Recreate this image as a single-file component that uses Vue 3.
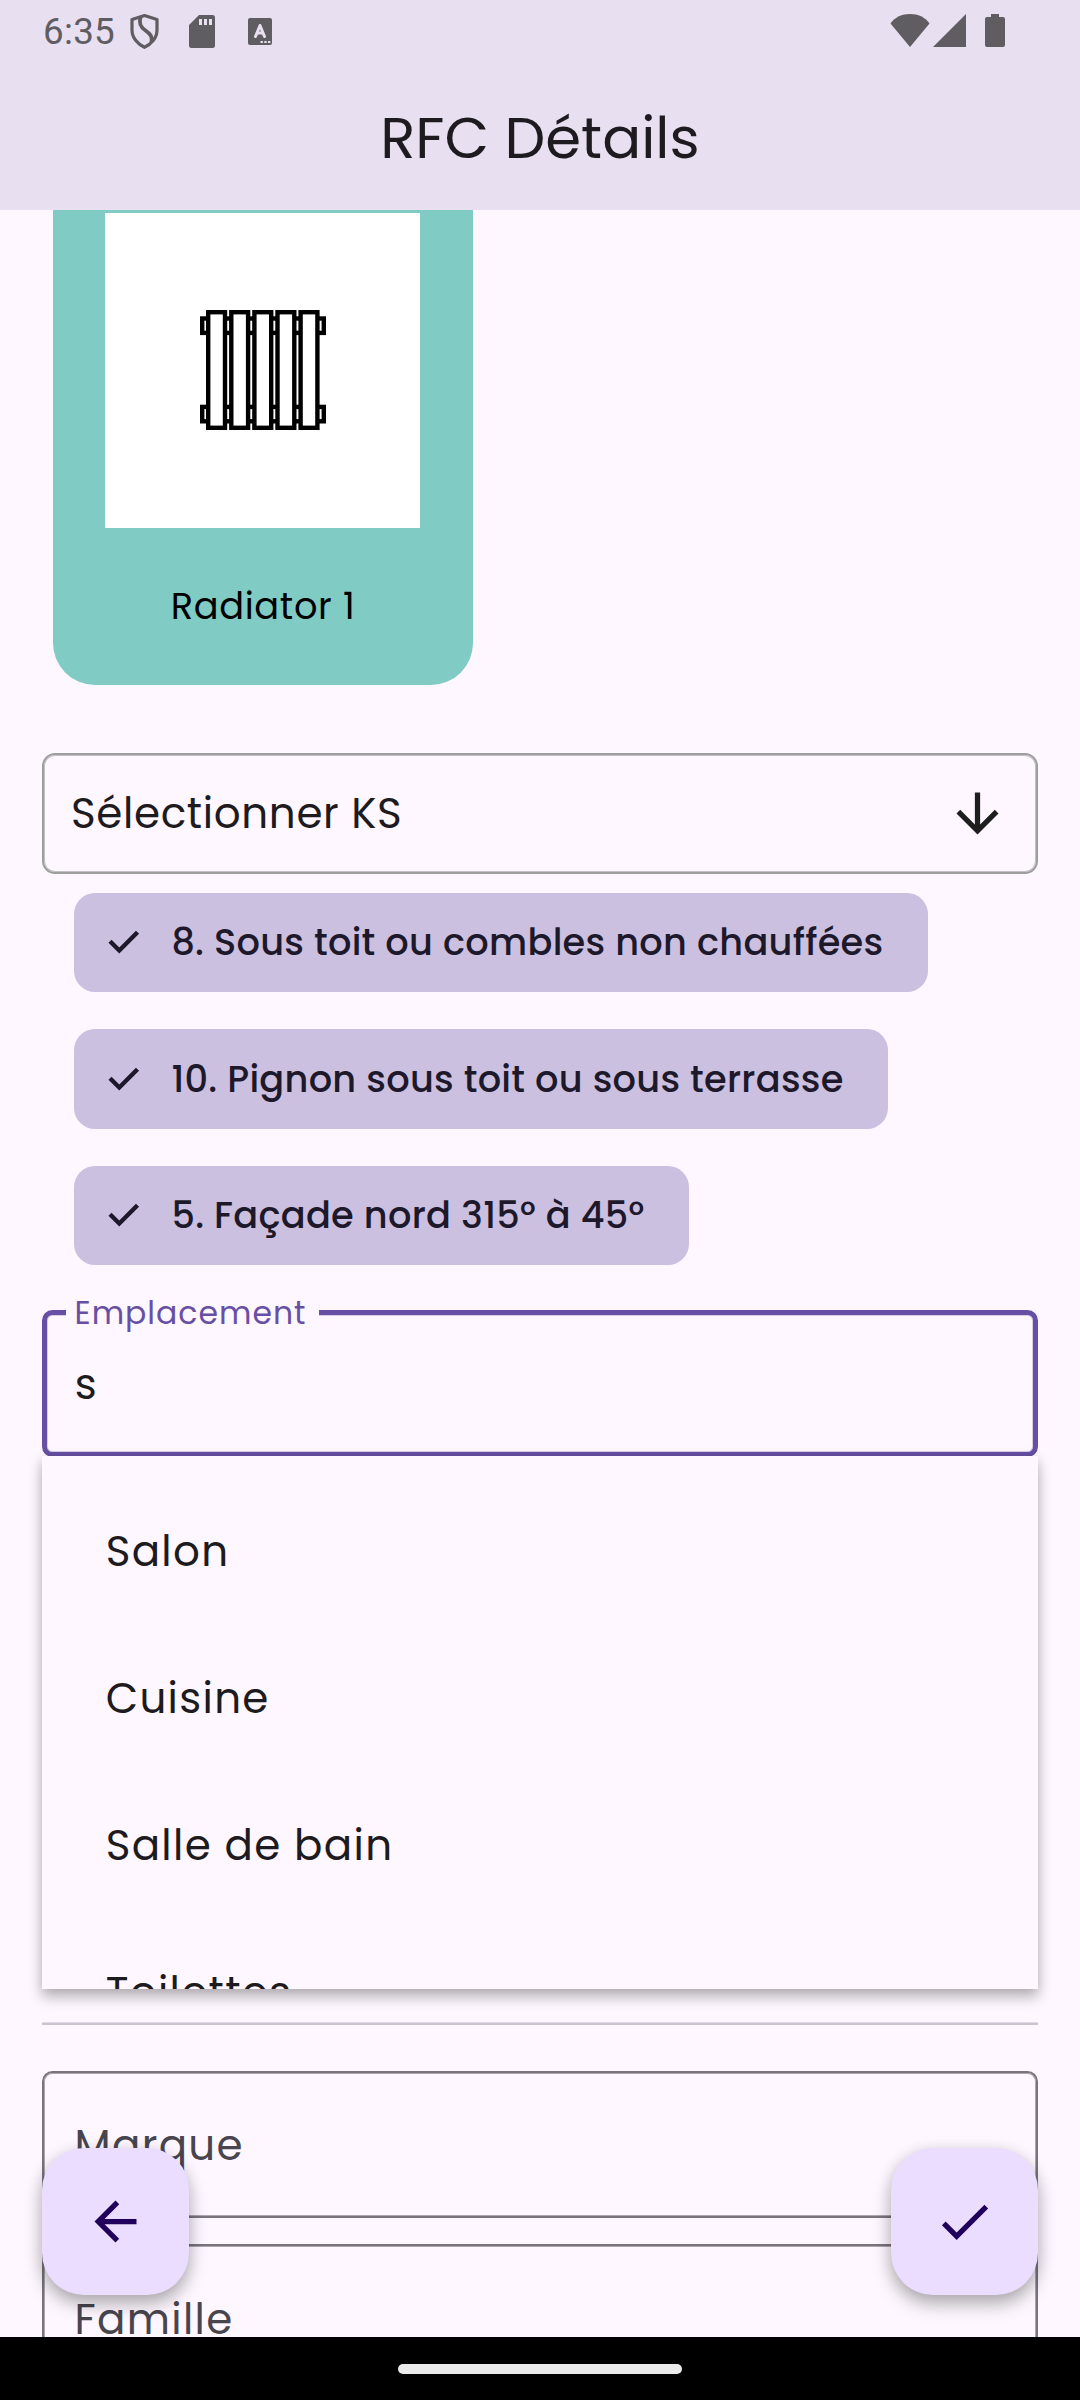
<script setup>
const chips = [
  { text: '8. Sous toit ou combles non chauffées', cls: 'c1' },
  { text: '10. Pignon sous toit ou sous terrasse', cls: 'c2' },
  { text: '5. Façade nord 315° à 45°', cls: 'c3' },
]
const options = ['Salon', 'Cuisine', 'Salle de bain', 'Toilettes']
const bars = [208.2, 231.3, 254.400, 277.5, 300.6]
</script>

<template>
  <div class="screen">
    <header class="header">
      <div class="status">
        <span class="clock">6:35</span>
        <svg class="shield" width="31" height="37" viewBox="0 0 31 37">
          <path d="M15.500 2.500L28 6.500V17C28 25 22 31.500 15.500 34.300C9 31.500 3 25 3 17V6.500Z" fill="none" stroke="#5f5c62" stroke-width="3.200" stroke-linejoin="round" />
          <path d="M11.500 4C9.500 11 12 14.500 16.500 17.500C21.500 21 23.500 23.500 22.500 29" fill="none" stroke="#5f5c62" stroke-width="3.800" />
        </svg>
        <svg class="sd" width="26" height="33" viewBox="0 0 26 33">
          <path fill-rule="evenodd" d="M10 0H23.500Q26 0 26 2.500V30.500Q26 33 23.500 33H2.500Q0 33 0 30.500V10ZM10 4V10H13V4ZM15 4V10H18V4ZM20 4V10H23V4Z" fill="#5f5c62" />
        </svg>
        <svg class="abox" width="24" height="27" viewBox="0 0 24 27">
          <rect width="24" height="27" rx="2" fill="#5f5c62" />
          <path d="M7.500 18.500L12 7.500L16.500 18.500M9 15H15" fill="none" stroke="#e8dff0" stroke-width="3" stroke-linecap="round" stroke-linejoin="round" />
          <path d="M12.500 23h2.400v2h-2.400zM16.300 23h2.400v2h-2.400zM20 23h2.400v2H20z" fill="#e8dff0" />
        </svg>
        <span class="spacer"></span>
        <svg class="wifi" width="40" height="33" viewBox="0 0 40 33">
          <path d="M20 33L0.500 9.500C5 3 12 0 20 0S35 3 39.500 9.500Z" fill="#5f5c62" />
        </svg>
        <svg class="signal" width="33" height="33" viewBox="0 0 33 33">
          <path d="M33 0V33H0Z" fill="#5f5c62" />
        </svg>
        <svg class="battery" width="20" height="33" viewBox="0 0 20 33">
          <path d="M6 0H14V3H18Q20 3 20 5V31Q20 33 18 33H2Q0 33 0 31V5Q0 3 2 3H6Z" fill="#5f5c62" />
        </svg>
      </div>
      <h1 class="title"><span>RFC Détails</span></h1>
    </header>

    <main class="content">
      <section class="card">
        <div class="photo">
          <svg width="129" height="125" viewBox="198 308 129 125">
            <g fill="#fff" stroke="#000" stroke-width="4.400">
              <rect x="202.200" y="318.500" width="121.600" height="14.400" />
              <rect x="202.200" y="406.900" width="121.600" height="14.400" />
              <rect v-for="x in bars" :key="x" :x="x" y="312.200" width="16.800" height="115.600" />
            </g>
          </svg>
        </div>
        <p class="card-label">Radiator 1</p>
      </section>

      <div class="select">
        <span class="select-text">Sélectionner KS</span>
        <svg width="63" height="63" viewBox="0 0 24 24">
          <path d="M20 12l-1.410-1.410L13 16.170V4h-2v12.170l-5.580-5.590L4 12l8 8 8-8z" fill="#1d1f1e" />
        </svg>
      </div>

      <div class="chips">
        <div v-for="c in chips" :key="c.text" class="chip" :class="c.cls">
          <svg width="42" height="42" viewBox="0 0 42 42">
            <path d="M7 20.200L16.300 29.500L34.500 11.300" fill="none" stroke="#1d192b" stroke-width="4.400" />
          </svg>
          <span>{{ c.text }}</span>
        </div>
      </div>

      <div class="field active">
        <span class="float-label">Emplacement</span>
        <span class="value">s</span>
        <div class="menu">
          <div v-for="o in options" :key="o" class="option">{{ o }}</div>
        </div>
      </div>

      <hr class="divider" />

      <div class="field outlined"><span class="placeholder">Marque</span></div>
      <div class="field outlined family"><span class="placeholder">Famille</span></div>
    </main>

    <footer class="navbar"><span class="pill"></span></footer>

    <button class="fab left">
      <svg width="63" height="63" viewBox="0 0 24 24">
        <path d="M20 11H7.830l5.590-5.590L12 4l-8 8 8 8 1.410-1.410L7.830 13H20v-2z" fill="#21005d" />
      </svg>
    </button>
    <button class="fab right">
      <svg width="63" height="63" viewBox="0 0 24 24">
        <path d="M9 16.170L4.830 12l-1.420 1.410L9 19 21 7l-1.410-1.410z" fill="#21005d" />
      </svg>
    </button>
  </div>
</template>

<style>
body {
  margin: 0;
  background: #fef7ff;
}
</style>

<style scoped>
.screen {
  position: relative;
  display: flex;
  flex-direction: column;
  width: 1080px;
  height: 2400px;
  overflow: hidden;
  background: #fef7ff;
  color: #1d1b20;
  font-family: Poppins, Inter, "Open Sans", sans-serif;
  white-space: nowrap;
}
.screen * {
  box-sizing: border-box;
}
svg {
  display: block;
  flex: none;
}
.header {
  flex: none;
  height: 210px;
  background: #e8dff0;
}
.status {
  display: flex;
  align-items: flex-start;
  height: 63px;
  padding: 0 75px 0 43px;
}
.clock {
  width: 86px;
  padding-top: 10px;
  font: 36.750px/43px Roboto, sans-serif;
  letter-spacing: 0.300px;
  color: #5f5c62;
}
.shield { margin-top: 13px; }
.sd { margin: 15px 0 0 29px; }
.abox { margin: 18px 0 0 33px; }
.spacer { flex: 1; }
.wifi { margin-top: 14px; }
.signal { margin: 14px 0 0 3px; }
.battery { margin: 14px 0 0 19px; }
.title {
  margin: 0;
  padding-top: 39px;
  text-align: center;
  font-size: 57.750px;
  line-height: 72px;
  font-weight: 400;
}
.content {
  flex: none;
  display: flex;
  flex-direction: column;
  height: 2127px;
  padding: 0 42px;
  overflow: hidden;
}
.card {
  flex: none;
  display: flex;
  flex-direction: column;
  align-items: center;
  width: 420px;
  height: 475px;
  margin-left: 11px;
  padding-top: 3px;
  border-radius: 0 0 42px 42px;
  background: #80cbc4;
}
.photo {
  display: flex;
  align-items: center;
  justify-content: center;
  width: 315px;
  height: 315px;
  margin-right: 1px;
  background: #fff;
}
.card-label {
  margin: 50px 0 0;
  font-size: 36.750px;
  line-height: 56px;
  letter-spacing: 0.656px;
  color: #000;
}
.select {
  flex: none;
  display: flex;
  align-items: center;
  justify-content: space-between;
  height: 121px;
  margin-top: 68px;
  padding: 0 27px;
  border: 2px solid #9e9e9e;
  border-radius: 13px;
  box-shadow: inset 0 0 0 1px rgba(158, 158, 158, 0.620);
}
.select-text {
  font-size: 42px;
  letter-spacing: 0.656px;
}
.chips {
  flex: none;
  display: flex;
  flex-direction: column;
  align-items: flex-start;
  gap: 37px;
  margin: 18.500px 0 0 31.500px;
}
.chip {
  display: flex;
  align-items: center;
  height: 99.500px;
  padding-left: 29.500px;
  border-radius: 21px;
  background: #cbc0e0;
  color: #1d192b;
  font-size: 36.750px;
  font-weight: 500;
  letter-spacing: 0.262px;
}
.chip span { margin-left: 26.400px; }
.c1 { width: 854px; }
.c2 { width: 814px; }
.c3 { width: 615px; }
.field {
  position: relative;
  flex: none;
  display: flex;
  align-items: center;
  height: 147px;
  border-radius: 10.500px;
  font-size: 42px;
  letter-spacing: 1.312px;
}
.outlined {
  margin-bottom: 26px;
  padding: 1px 0 0 30.500px;
  border: 2px solid #79747e;
  box-shadow: inset 0 0 0 1px rgba(121, 116, 126, 0.620);
}
.family { padding-top: 3px; }
.active {
  margin-top: 45px;
  padding: 1px 0 0 27.700px;
  border: 5px solid #6750a4;
  box-shadow: inset 0 0 0 1px rgba(103, 80, 164, 0.250);
}
.float-label {
  position: absolute;
  left: 19px;
  top: -22px;
  width: 253px;
  padding-left: 8.500px;
  background: #fef7ff;
  color: #6750a4;
  font-size: 31.500px;
  line-height: 40px;
  letter-spacing: 0.984px;
}
.menu {
  position: absolute;
  z-index: 2;
  left: -5px;
  top: 141px;
  width: 996px;
  height: 533px;
  padding: 22px 63.700px 0;
  overflow: hidden;
  background: #fef7ff;
  box-shadow: 0 8px 13px rgba(0, 0, 0, 0.280), 0 0 10px rgba(0, 0, 0, 0.080);
}
.option {
  height: 147px;
  line-height: 147px;
}
.divider {
  flex: none;
  width: 996px;
  height: 3px;
  margin: 565px 0 46px;
  border: 0;
  border-top: 1px solid #dfd9e4;
  background: #cac4d0;
}
.placeholder { color: #49454f; }
.navbar {
  flex: none;
  position: relative;
  z-index: 4;
  display: flex;
  justify-content: center;
  height: 63px;
  padding-top: 27px;
  background: #000;
}
.pill {
  width: 284px;
  height: 10px;
  border-radius: 5px;
  background: #ebebeb;
}
.fab {
  position: absolute;
  z-index: 3;
  top: 2148px;
  display: flex;
  align-items: center;
  justify-content: center;
  width: 147px;
  height: 147px;
  padding: 0;
  border: 0;
  border-radius: 42px;
  background: #eaddff;
  box-shadow: 0 10px 18px rgba(0, 0, 0, 0.260), 0 2px 16px rgba(0, 0, 0, 0.110);
}
.left { left: 42px; }
.right { left: 891px; }
</style>
